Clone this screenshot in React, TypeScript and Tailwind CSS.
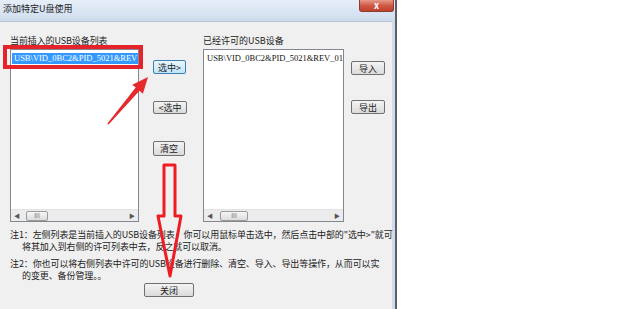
import React from "react";

const cjk = "font-['Noto_Sans_CJK_SC','Noto_Sans',sans-serif]";

function WinButton({ label, focused, className }: { label: string; focused?: boolean; className: string }) {
  return (
    <div
      className={`flex items-center justify-center rounded-[2px] border text-[9px] leading-none text-[#1c1c1c] ${
        focused
          ? "border-[#3c7fb1] bg-gradient-to-b from-[#eaf6fd] to-[#bee6fd]"
          : "border-[#707070] bg-gradient-to-b from-[#f4f4f4] to-[#dadada]"
      } ${className}`}
    >
      {label}
    </div>
  );
}

function ScrollBar({ thumbLeft, thumbWidth }: { thumbLeft: string; thumbWidth: string }) {
  return (
    <div className="flex h-[12px] items-center bg-[#ececec] border-t border-[#e2e2e2]">
      <span className="w-[12px] text-center text-[6px] leading-none text-[#555]">◀</span>
      <div
        className={`flex h-[10px] items-center justify-center rounded-[2px] border border-[#9b9b9b] bg-gradient-to-b from-[#f6f6f6] to-[#dcdcdc] text-[6px] leading-none text-[#666] ${thumbLeft} ${thumbWidth}`}
      >
        III
      </div>
      <div className="flex-1" />
      <span className="w-[12px] text-center text-[6px] leading-none text-[#555]">▶</span>
    </div>
  );
}

export default function App() {
  return (
    <div className={`flex h-[309px] w-[620px] overflow-hidden bg-white ${cjk}`}>
      <div className="relative flex h-full w-[397px] flex-col border-r-2 border-[#5c6066] bg-[#cfdcec]">
        {/* title bar */}
        <div className="flex h-[18px] items-start bg-gradient-to-b from-[#e6eef8] to-[#d3e0f0]">
          <span className="pl-[3px] pt-[3px] text-[9px] leading-[11px] text-[#222]">添加特定U盘使用</span>
          <div className="ml-auto mr-[1px] flex h-[12px] w-[35px] items-center justify-center rounded-b-[3px] border border-t-0 border-[#8d3a2f] bg-gradient-to-b from-[#e49a8a] via-[#cf5a44] to-[#c0412c] text-[9px] font-bold leading-none text-white">
            x
          </div>
        </div>

        {/* client area */}
        <div className="mr-[3px] mt-[3px] flex flex-1 flex-col border-t border-[#b7c6d8] bg-[#f0f0f0]">
          <div className="flex pl-[10px] pt-[13px]">
            <div className="flex w-[129px] flex-col">
              <span className="h-[12px] whitespace-nowrap text-[9px] leading-[12px] tracking-[-0.1px] text-[#222]">当前插入的USB设备列表</span>
              <div className="mt-[2px] flex h-[173px] flex-col border border-[#828790] bg-white">
                <div className="flex-1 overflow-hidden pl-[1px] pt-[3px]">
                  <div className="h-[11px] overflow-hidden whitespace-nowrap bg-[#3399ff] pl-[2px] font-['Liberation_Serif',serif] text-[8.5px] leading-[11px] text-white">
                    USB\VID_0BC2&amp;PID_5021&amp;REV
                  </div>
                </div>
                <ScrollBar thumbLeft="ml-[3px]" thumbWidth="w-[22px]" />
              </div>
            </div>

            <div className="ml-[14px] flex w-[33px] flex-col pt-[25px]">
              <WinButton label="选中>" focused className="h-[14px] w-[33px]" />
              <WinButton label="<选中" className="mt-[27px] h-[13px] w-[34px]" />
              <WinButton label="清空" className="mt-[27px] h-[15px] w-[32px]" />
            </div>

            <div className="ml-[17px] flex w-[141px] flex-col">
              <span className="h-[12px] whitespace-nowrap text-[9px] leading-[12px] text-[#222]">已经许可的USB设备</span>
              <div className="mt-[2px] flex h-[173px] flex-col border border-[#828790] bg-white">
                <div className="flex-1 overflow-hidden pl-[3px] pt-[3px]">
                  <div className="h-[11px] whitespace-nowrap font-['Liberation_Serif',serif] text-[8.5px] leading-[11px] text-[#111]">
                    USB\VID_0BC2&amp;PID_5021&amp;REV_01
                  </div>
                </div>
                <ScrollBar thumbLeft="ml-[4px]" thumbWidth="w-[28px]" />
              </div>
            </div>

            <div className="ml-[7px] flex w-[34px] flex-col pt-[26px]">
              <WinButton label="导入" className="h-[14px] w-[34px]" />
              <WinButton label="导出" className="mt-[25px] h-[14px] w-[34px]" />
            </div>
          </div>

          {/* notes */}
          <div className="flex flex-col pl-[10px] pt-[7px] text-[9px] tracking-[-0.1px] text-[#222]">
            <span className="whitespace-nowrap leading-[12px]">注1：左侧列表是当前插入的USB设备列表，你可以用鼠标单击选中，然后点击中部的"选中&gt;"就可</span>
            <span className="whitespace-nowrap pl-[12px] leading-[12px]">将其加入到右侧的许可列表中去，反之就可以取消。</span>
            <span className="mt-[5px] whitespace-nowrap leading-[12px]">注2：你也可以将右侧列表中许可的USB设备进行删除、清空、导入、导出等操作，从而可以实</span>
            <span className="whitespace-nowrap pl-[12px] leading-[12px]">的变更、备份管理。。</span>
          </div>

          <div className="pl-[144px] pt-[1px]">
            <WinButton label="关闭" className="h-[14px] w-[50px]" />
          </div>
        </div>

        {/* red annotation box round the selected device */}
        <div className="absolute left-[3px] top-[45px] h-[24px] w-[140px] border-[4px] border-[#e4232a]" />

        {/* red annotation arrows */}
        <svg className="pointer-events-none absolute left-0 top-0" width="397" height="309" viewBox="0 0 397 309">
          <polygon
            points="108.6,124.5 139.5,90.8 142.9,93.7 148,77 132.3,84.7 135.7,87.6 107.4,123.5"
            fill="#e62a2c"
          />
          <polygon
            points="164,165 175,165 175,216 181,216 170,276 158,216 164,216"
            fill="none"
            stroke="#f01c24"
            strokeWidth="3"
            strokeLinejoin="round"
          />
        </svg>
      </div>
      <div className="flex-1 bg-white" />
    </div>
  );
}
